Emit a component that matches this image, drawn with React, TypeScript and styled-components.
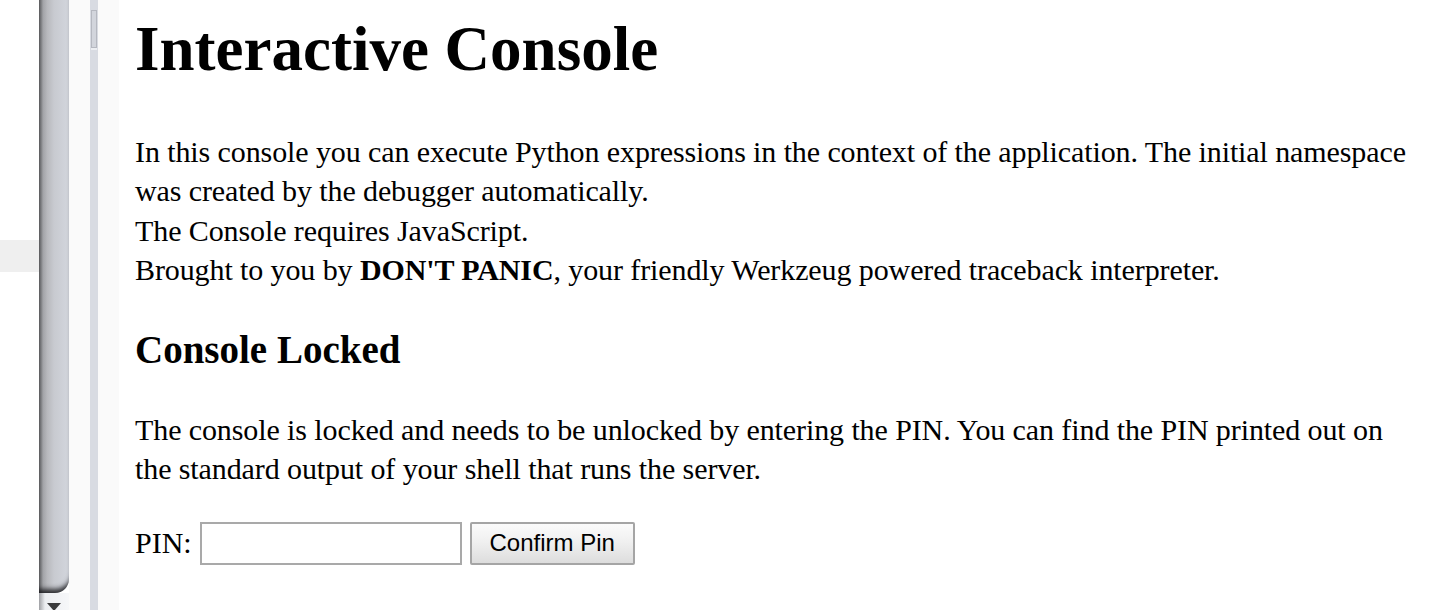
import styled, { createGlobalStyle } from "styled-components";

const Global = createGlobalStyle`
  html, body {
    margin: 0;
    padding: 0;
    background: #ffffff;
    overflow: hidden;
  }
`;

const Page = styled.div`
  display: flex;
  height: 610px;
  width: 1449px;
`;

const Outside = styled.div`
  width: 39px;
  flex: none;
  display: flex;
  flex-direction: column;
  padding-top: 240px;
  box-sizing: border-box;
`;

const OutsideBand = styled.div`
  height: 32px;
  background: #efefef;
`;

const Strip = styled.div`
  width: 30px;
  flex: none;
  display: flex;
  flex-direction: column;
`;

const StripBody = styled.div`
  flex: 1;
  background: linear-gradient(
    to right,
    #5f5f62 0,
    #7f8083 7%,
    #a3a4a8 14%,
    #b8b9bd 28%,
    #c8cad0 50%,
    #d3d6dd 100%
  );
  border-bottom-right-radius: 14px;
  box-shadow: inset 0 -7px 5px -3px rgba(20, 20, 24, 0.85);
`;

const StripFoot = styled.div`
  height: 17px;
  display: flex;
  justify-content: center;
  padding-top: 10px;
  box-sizing: border-box;
  background: linear-gradient(to right, #9fa0a4 0, #eceef1 20%, #f6f7f9 100%);
`;

const ArrowDown = styled.div`
  width: 0;
  height: 0;
  border-left: 7px solid transparent;
  border-right: 7px solid transparent;
  border-top: 8px solid #3a3a3c;
`;

const Gutter = styled.div`
  width: 50px;
  flex: none;
  background: #fafafa;
  display: flex;
  padding-left: 21px;
  box-sizing: border-box;
`;

const Track = styled.div`
  width: 8px;
  background: #d8dbe2;
  padding-top: 10px;
  box-sizing: border-box;
`;

const Thumb = styled.div`
  height: 38px;
  margin: 0 1px;
  border: 1px solid #b5b8c0;
  background: #d2d5dc;
  box-shadow: 0 2px 0 #eceef2;
  box-sizing: border-box;
`;

const Content = styled.main`
  flex: 1;
  padding: 0 30px 0 16px;
  font-family: "Liberation Serif", "Times New Roman", serif;
  color: #000;
`;

const Title = styled.h1`
  margin: 13px 0 0;
  font-size: 63px;
  line-height: 72px;
  font-weight: bold;
`;

const Text = styled.p<{ $top: number }>`
  margin: ${(p) => p.$top}px 0 0;
  font-size: 30px;
  line-height: 39.3px;
  letter-spacing: -0.1px;
`;

const Subtitle = styled.h2`
  margin: 37px 0 0;
  font-size: 39px;
  line-height: 48px;
  font-weight: bold;
`;

const PinRow = styled.form`
  margin-top: 33px;
  display: flex;
  align-items: center;
  font-size: 30px;
`;

const PinLabel = styled.label`
  margin-right: 8px;
`;

const PinInput = styled.input`
  width: 262px;
  height: 43px;
  box-sizing: border-box;
  border: 2px solid #a9a9a9;
  background: #fff;
  padding: 0 4px;
  font-size: 24px;
  outline: none;
`;

const ConfirmButton = styled.button`
  margin-left: 8px;
  width: 165px;
  height: 43px;
  box-sizing: border-box;
  border: 2px solid #a5a5a5;
  border-radius: 2px;
  background: linear-gradient(to bottom, #fbfbfb 0, #f0f0f0 45%, #dddddd 100%);
  font-family: "Liberation Sans", Arial, sans-serif;
  font-size: 24px;
  color: #000;
  padding: 0;
`;

export default function App() {
  return (
    <>
      <Global />
      <Page>
        <Outside>
          <OutsideBand />
        </Outside>
        <Strip>
          <StripBody />
          <StripFoot>
            <ArrowDown />
          </StripFoot>
        </Strip>
        <Gutter>
          <Track>
            <Thumb />
          </Track>
        </Gutter>
        <Content>
          <Title>Interactive Console</Title>
          <Text $top={47}>
            In this console you can execute Python expressions in the context of the
            application. The initial namespace was created by the debugger
            automatically.
            <br />
            The Console requires JavaScript.
            <br />
            Brought to you by <b>DON'T PANIC</b>, your friendly Werkzeug powered
            traceback interpreter.
          </Text>
          <Subtitle>Console Locked</Subtitle>
          <Text $top={36}>
            The console is locked and needs to be unlocked by entering the PIN. You
            can find the PIN printed out on the standard output of your shell that
            runs the server.
          </Text>
          <PinRow onSubmit={(e) => e.preventDefault()}>
            <PinLabel htmlFor="pin">PIN:</PinLabel>
            <PinInput id="pin" type="password" />
            <ConfirmButton type="submit">Confirm Pin</ConfirmButton>
          </PinRow>
        </Content>
      </Page>
    </>
  );
}
